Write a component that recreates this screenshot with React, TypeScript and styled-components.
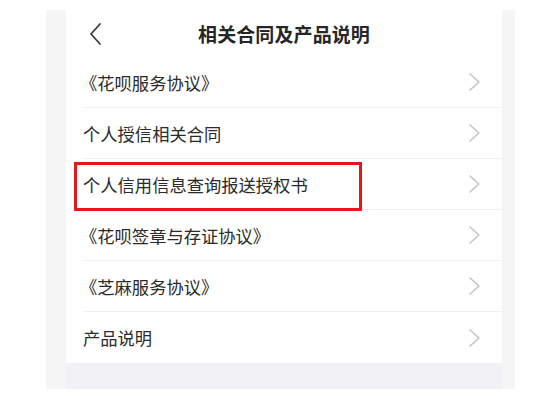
import styled, { createGlobalStyle } from "styled-components";

const GlobalStyle = createGlobalStyle`
  html, body {
    margin: 0;
    padding: 0;
    background: #ffffff;
  }
  body {
    font-family: "Noto Sans CJK SC", "Noto Sans", sans-serif;
  }
`

const Page = styled.div`
  width: 560px;
  height: 400px;
  padding: 10px 0 0 46px;
  box-sizing: border-box;
  display: flex;
  align-items: flex-start;
`

const Screen = styled.div`
  width: 469px;
  height: 379px;
  box-sizing: border-box;
  padding: 0 13px 0 20px;
  background: #f5f5f5;
  display: flex;
`

const Inner = styled.div`
  flex: 1;
  background: #f1f1f6;
  display: flex;
  flex-direction: column;
`

const Card = styled.div`
  background: #ffffff;
  display: flex;
  flex-direction: column;
`

const Header = styled.div`
  height: 47px;
  position: relative;
  display: flex;
  align-items: center;
  justify-content: center;
`

const BackButton = styled.button`
  position: absolute;
  left: 19px;
  top: 12px;
  width: 20px;
  height: 24px;
  padding: 0;
  border: none;
  background: none;
  display: flex;
  align-items: center;
  justify-content: center;
`

const Title = styled.h1`
  margin: 0;
  font-size: 19px;
  font-weight: 700;
  color: #262626;
  letter-spacing: 0.1px;
  padding-bottom: 1px;
`

const Row = styled.div<{ last?: boolean }>`
  position: relative;
  height: 51px;
  box-sizing: border-box;
  margin-left: 17px;
  padding-right: 21px;
  display: flex;
  align-items: center;
  justify-content: space-between;
  border-bottom: ${props => props.last ? "none" : "1px solid #f0f0f0"};
`

const Label = styled.span<{ bracket?: boolean }>`
  font-size: 17.3px;
  color: #2a2a2a;
  margin-left: ${props => props.bracket ? "-3px" : "0"};
`

const Highlight = styled.div`
  position: absolute;
  left: -9px;
  top: 3px;
  width: 288px;
  height: 49px;
  box-sizing: border-box;
  border: 3px solid #e5161e;
  pointer-events: none;
`

function Chevron({ dir, color, width }: { dir: "left" | "right", color: string, width: number }) {
  const d = dir === "left" ? "M13 2 L4 12 L13 22" : "M2 2 L11 10 L2 18";
  return <svg width={dir === "left" ? 16 : 13} height={dir === "left" ? 24 : 20} viewBox={dir === "left" ? "0 0 16 24" : "0 0 13 20"}>
    <path d={d} fill="none" stroke={color} strokeWidth={width} strokeLinecap="round" strokeLinejoin="round" />
  </svg>
}

const items = [
  { label: "《花呗服务协议》", bracket: true },
  { label: "个人授信相关合同" },
  { label: "个人信用信息查询报送授权书", marked: true },
  { label: "《花呗签章与存证协议》", bracket: true },
  { label: "《芝麻服务协议》", bracket: true },
  { label: "产品说明" },
]

export default function App() {
  return <>
    <GlobalStyle />
    <Page>
      <Screen>
        <Inner>
          <Card>
            <Header>
              <BackButton aria-label="back">
                <Chevron dir="left" color="#3a3a3a" width={1.8} />
              </BackButton>
              <Title>相关合同及产品说明</Title>
            </Header>
            {items.map((item, i) => (
              <Row key={item.label} last={i === items.length - 1}>
                <Label bracket={item.bracket}>{item.label}</Label>
                <Chevron dir="right" color="#c2c2c2" width={1.5} />
                {item.marked && <Highlight />}
              </Row>
            ))}
          </Card>
        </Inner>
      </Screen>
    </Page>
  </>
}
